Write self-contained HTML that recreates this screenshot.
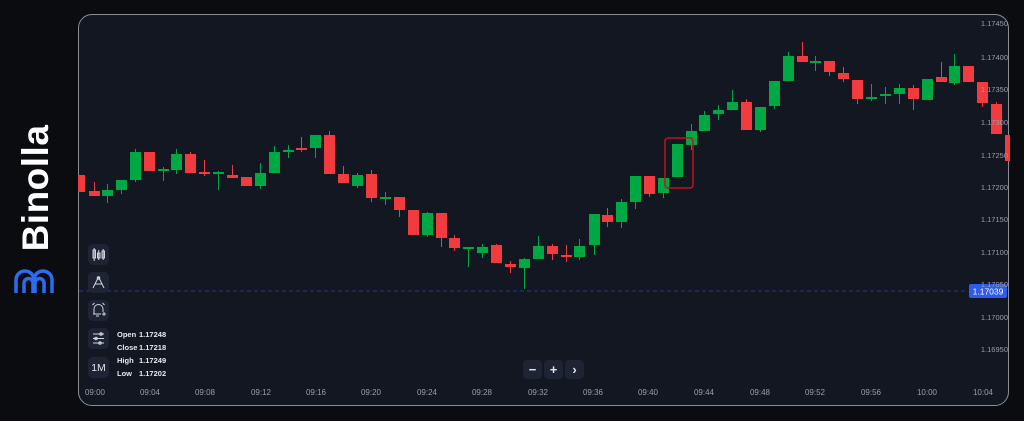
<!DOCTYPE html>
<html><head><meta charset="utf-8"><style>
html,body{margin:0;padding:0;width:1024px;height:421px;background:#0b0c10;overflow:hidden;font-family:"Liberation Sans",sans-serif}
.frame{position:absolute;left:78px;top:14px;width:931px;height:392px;border:1px solid #8a8d94;border-radius:14px;background:#131722;box-sizing:border-box;overflow:hidden}
.logo{position:absolute;left:36px;top:188px;transform:translate(-50%,-50%) rotate(-90deg);color:#fff;font-weight:bold;font-size:37px;letter-spacing:0.5px;white-space:nowrap}
.btn{position:absolute;left:88px;width:21px;height:21px;background:#1e2433;border-radius:5px;color:#cfd3dc;font-size:11px;display:flex;align-items:center;justify-content:center}
.ohlc{position:absolute;left:117px;font-size:7.5px;color:#e6e8ec;font-weight:bold}
.ohlc span{position:absolute;left:22px}
.zb{position:absolute;top:360px;width:19px;height:19px;background:#1e2433;border-radius:4px;color:#e0e3ea;font-size:13px;font-weight:bold;display:flex;align-items:center;justify-content:center}
</style></head><body>
<div class="frame"></div>
<div class="logo">Binolla</div>
<svg style="position:absolute;left:0;top:0" width="1024" height="421">
<path d="M16 293 V280 a9 9 0 0 1 18 0 V293 M24 293 V283 a4.5 4.5 0 0 1 9 0 V293 M34 280 a9 9 0 0 1 18 0 V293 M35 293 V283 a4.5 4.5 0 0 1 9 0 V293" fill="none" stroke="#2c6df0" stroke-width="3.5"/>
<g id="c"></g>
<line x1="79" y1="291" x2="968" y2="291" stroke="#2a3a8a" stroke-width="1" stroke-dasharray="4 3"/>
<rect x="665" y="138" width="28" height="50" rx="3" fill="none" stroke="#c0141b" stroke-width="1.5"/>
<rect x="969" y="284" width="38" height="14" rx="2" fill="#2f5be8"/>
<text x="988" y="294.5" fill="#fff" font-size="8.5" text-anchor="middle" font-family="Liberation Sans">1.17039</text>
<g font-size="7.5" fill="#9a9ea8" text-anchor="end" font-family="Liberation Sans">
<text x="1008" y="26">1.17450</text><text x="1008" y="60">1.17400</text><text x="1008" y="92">1.17350</text><text x="1008" y="125">1.17300</text><text x="1008" y="158">1.17250</text><text x="1008" y="190">1.17200</text><text x="1008" y="222">1.17150</text><text x="1008" y="255">1.17100</text><text x="1008" y="287">1.17050</text><text x="1008" y="320">1.17000</text><text x="1008" y="352">1.16950</text>
</g>
<g font-size="8" fill="#9a9ea8" text-anchor="middle" font-family="Liberation Sans">
<text x="95" y="395">09:00</text><text x="150" y="395">09:04</text><text x="205" y="395">09:08</text><text x="261" y="395">09:12</text><text x="316" y="395">09:16</text><text x="371" y="395">09:20</text><text x="427" y="395">09:24</text><text x="482" y="395">09:28</text><text x="538" y="395">09:32</text><text x="593" y="395">09:36</text><text x="648" y="395">09:40</text><text x="704" y="395">09:44</text><text x="760" y="395">09:48</text><text x="815" y="395">09:52</text><text x="871" y="395">09:56</text><text x="927" y="395">10:00</text><text x="983" y="395">10:04</text>
</g>
<rect x="88" y="244" width="21" height="21" rx="5" fill="#1e2433"/>
<rect x="88" y="272" width="21" height="21" rx="5" fill="#1e2433"/>
<rect x="88" y="300" width="21" height="21" rx="5" fill="#1e2433"/>
<rect x="88" y="328" width="21" height="21" rx="5" fill="#1e2433"/>
<rect x="88" y="357" width="21" height="21" rx="5" fill="#1e2433"/>
<g fill="none" stroke="#d0d4dc" stroke-width="1">
<rect x="93" y="250" width="2.5" height="8"/><line x1="94.2" y1="248" x2="94.2" y2="261"/>
<rect x="97.5" y="253" width="2.5" height="5"/><line x1="98.7" y1="250" x2="98.7" y2="260"/>
<rect x="102" y="251" width="2.5" height="7"/><line x1="103.2" y1="249" x2="103.2" y2="260"/>
<path d="M93 288 L98.5 277 L104 288 M95 284 H102"/><circle cx="98.5" cy="278" r="1.3"/>
<path d="M94 314 V309 a4.5 4.5 0 0 1 9 0 V312 M93 314 H101 M96 316 H99 M92.5 305 l2-2 M104.5 305 l-2-2 M102 314 h4 M104 312 v4"/>
<path d="M93 334 H104 M93 338.5 H104 M93 343 H104"/><circle cx="101" cy="334" r="1.3"/><circle cx="96" cy="338.5" r="1.3"/><circle cx="100" cy="343" r="1.3"/>
</g>
<text x="98.5" y="371" fill="#e0e3ea" font-size="10.5" text-anchor="middle" font-family="Liberation Sans">1M</text>
</svg>
<div class="ohlc" style="top:330px">Open<span>1.17248</span></div>
<div class="ohlc" style="top:343px">Close<span>1.17218</span></div>
<div class="ohlc" style="top:356px">High<span>1.17249</span></div>
<div class="ohlc" style="top:369px">Low<span>1.17202</span></div>
<div class="zb" style="left:523px">&minus;</div>
<div class="zb" style="left:544px">+</div>
<div class="zb" style="left:565px">&rsaquo;</div>
<script>
var d=[
[78,175,192,175,192,'r'],[89,191,196,182,196,'r'],[102,190,196,184,203,'g'],[116,180,190,180,194,'g'],[130,152,180,149,182,'g'],[144,152,171,152,171,'r'],[158,169,170,167,181,'g'],[171,154,170,149,174,'g'],[185,154,173,152,173,'r'],[199,172,174,160,176,'r'],[213,172,174,171,190,'g'],[227,175,178,165,178,'r'],[241,177,186,177,186,'r'],[255,173,186,163,189,'g'],[269,152,173,146,173,'g'],[283,150,152,145,158,'g'],[296,148,150,137,152,'r'],[310,135,148,135,158,'g'],[324,135,174,131,174,'r'],[338,174,183,166,183,'r'],[352,175,186,173,188,'g'],[366,174,198,170,202,'r'],[380,197,199,192,205,'g'],[394,197,210,197,217,'r'],[408,210,235,210,235,'r'],[422,213,235,212,237,'g'],[436,213,238,213,247,'r'],[449,238,248,235,251,'r'],[463,247,248,247,267,'g'],[477,247,253,244,258,'g'],[491,245,263,244,263,'r'],[505,264,267,261,273,'r'],[519,259,268,258,289,'g'],[533,246,259,236,259,'g'],[547,246,254,244,260,'r'],[561,255,257,245,262,'r'],[574,246,257,239,260,'g'],[589,214,245,214,255,'g'],[602,215,222,208,227,'r'],[616,202,222,199,228,'g'],[630,176,202,176,209,'g'],[644,176,194,176,197,'r'],[658,178,193,178,198,'g'],[672,144,177,144,177,'g'],[686,131,145,124,150,'g'],[699,115,131,111,131,'g'],[713,110,114,105,120,'g'],[727,102,110,90,110,'g'],[741,102,130,99,130,'r'],[755,107,130,107,132,'g'],[769,81,106,81,109,'g'],[783,56,81,52,81,'g'],[797,56,62,42,62,'r'],[810,61,63,56,71,'g'],[824,61,72,61,76,'r'],[838,73,79,67,82,'r'],[852,80,99,80,104,'r'],[866,97,99,84,101,'g'],[880,94,96,87,104,'g'],[894,88,94,84,104,'g'],[908,88,99,85,110,'r'],[922,79,100,79,100,'g'],[936,77,82,62,82,'r'],[949,66,83,54,85,'g'],[963,66,82,66,82,'r'],[977,82,103,82,107,'r'],[991,104,134,102,134,'r'],[1005,135,161,135,161,'r']];
var s='';d.forEach(function(c){var col=c[5]=='r'?'#f23b3f':'#00a843';var w=c[0]==78?7:(c[0]==1005?5:11);var cx=c[0]+w/2;if(c[0]==78)cx=81.5;
s+='<line x1="'+cx+'" y1="'+c[3]+'" x2="'+cx+'" y2="'+c[4]+'" stroke="'+col+'" stroke-width="1"/>';
s+='<rect x="'+c[0]+'" y="'+c[1]+'" width="'+w+'" height="'+Math.max(2,c[2]-c[1])+'" fill="'+col+'"/>';});
document.getElementById('c').innerHTML=s;
</script>
</body></html>
